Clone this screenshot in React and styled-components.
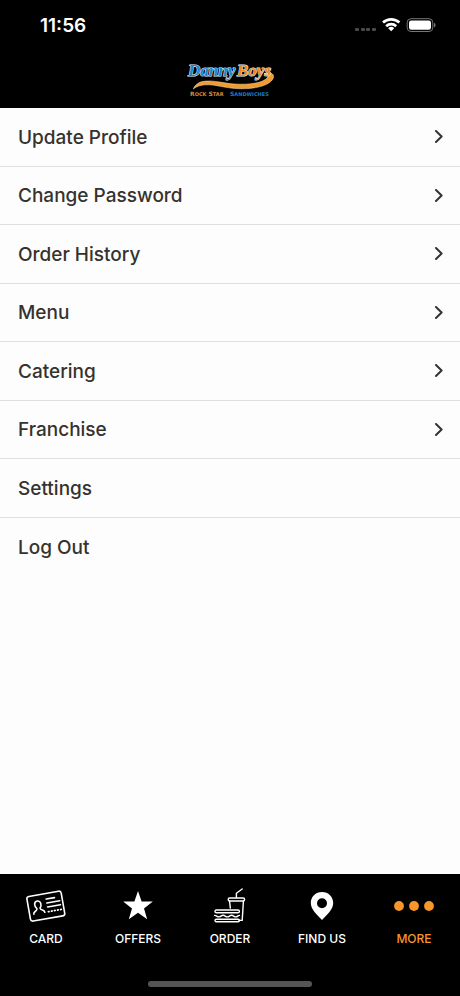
import React from "react";
import styled, { createGlobalStyle } from "styled-components";

const menuItems = [
  { label: "Update Profile", href: "#" },
  { label: "Change Password", href: "#" },
  { label: "Order History", href: "#" },
  { label: "Menu", href: "#" },
  { label: "Catering", href: "#" },
  { label: "Franchise", href: "#" },
  { label: "Settings" },
  { label: "Log Out" },
];

const tabs = [
  { label: "CARD", icon: <CardIcon /> },
  { label: "OFFERS", icon: <StarIcon /> },
  { label: "ORDER", icon: <OrderIcon /> },
  { label: "FIND US", icon: <PinIcon /> },
  { label: "MORE", icon: <MoreIcon />, active: true },
];

const App = () => {
  return (
    <>
      <GlobalStyle />
      <StScreen>
        {/* -------------- Header -------------- */}
        <StHeader>
          <StStatusBar>
            <StTime>11:56</StTime>
            <StatusIcons />
          </StStatusBar>
          <StBrand>
            <Logo />
          </StBrand>
        </StHeader>

        {/* -------------- Menu -------------- */}
        <StMain>
          <StList>
            {menuItems.map(({ label, href }) => (
              <StItem key={label}>
                {href ? (
                  <StRowLink href={href}>
                    {label}
                    <Chevron />
                  </StRowLink>
                ) : (
                  <StRowButton type="button">{label}</StRowButton>
                )}
              </StItem>
            ))}
          </StList>
        </StMain>

        {/* -------------- Tab Bar -------------- */}
        <StFooter>
          <StTabs>
            {tabs.map(({ label, icon, active }) => (
              <StTab
                key={label}
                href="#"
                $active={active}
                aria-current={active ? "page" : undefined}
              >
                {icon}
                {label}
              </StTab>
            ))}
          </StTabs>
          <StHomeIndicator />
        </StFooter>
      </StScreen>
    </>
  );
};

export default App;

function StatusIcons() {
  return (
    <svg width="82" height="16" viewBox="0 0 82 16" aria-hidden="true">
      <g fill="#4a4a4a">
        <rect x="1" y="11" width="4" height="3" rx="1" />
        <rect x="7" y="11" width="4" height="3" rx="1" />
        <rect x="12" y="11" width="4" height="3" rx="1" />
        <rect x="18" y="11" width="4" height="3" rx="1" />
      </g>
      <g fill="none" stroke="#fff" strokeWidth="2.7">
        <path d="M29 5.600a12 12 0 0 1 16.400 0" />
        <path d="M32.200 9.200a7.200 7.200 0 0 1 10 0" />
      </g>
      <path d="M34.200 11.200a4.400 4.400 0 0 1 6 0l-3 3.100z" fill="#fff" />
      <rect
        x="53.200"
        y="1.700"
        width="25.600"
        height="12.800"
        rx="3.800"
        fill="none"
        stroke="#777"
      />
      <rect x="55" y="3.500" width="22" height="9.200" rx="2.300" fill="#fff" />
      <path d="M80 5.800c2 .8 2 3.800 0 4.600z" fill="#777" />
    </svg>
  );
}

function Logo() {
  return (
    <svg
      width="92"
      height="40"
      viewBox="0 0 92 40"
      role="img"
      aria-label="DannyBoys Rock Star Sandwiches"
    >
      <path
        d="M9.300 29C11 24.500 15 22 20 21.300C30 20 40 23.400 50 24C66 25 79 23 83.500 17.500C85 15.600 83 14.400 80 13.600C86 11.800 90 13.500 89.500 17C88.500 22.500 80 27.500 63 28.600C46 29.500 36 25.500 26 24.800C18 24.400 13 26 9.300 29z"
        fill="#f39a2d"
        stroke="#ffe9c8"
        strokeWidth="0.5"
      />
      <g
        fontFamily='"Liberation Serif", serif'
        fontSize="17"
        fontWeight="700"
        fontStyle="italic"
        stroke="#e8f4ff"
        strokeWidth="1"
        paintOrder="stroke"
      >
        <text x="4" y="16" fill="#1c86cc">
          Danny
        </text>
        <text x="53" y="16" fill="#f08a1d">
          Boys
        </text>
      </g>
      <g
        fontFamily='"DejaVu Sans", sans-serif'
        fontWeight="700"
        fontSize="6"
      >
        <text x="6" y="36" fill="#d98a3c">
          R<tspan fontSize="5">OCK</tspan> S<tspan fontSize="5">TAR</tspan>
        </text>
        <text x="46" y="36" fill="#1f7bb8">
          S<tspan fontSize="5">ANDWICHES</tspan>
        </text>
      </g>
    </svg>
  );
}

function Chevron() {
  return (
    <svg width="10" height="14" viewBox="0 0 10 14" aria-hidden="true">
      <path
        d="M2 1L7.600 6.500L2 12"
        fill="none"
        stroke="#333"
        strokeWidth="2"
        strokeLinecap="round"
        strokeLinejoin="round"
      />
    </svg>
  );
}

function CardIcon() {
  return (
    <svg width="44" height="36" viewBox="0 0 44 36" aria-hidden="true">
      <g
        transform="rotate(-10 22 18)"
        fill="none"
        stroke="currentColor"
        strokeWidth="1.6"
        strokeLinecap="round"
      >
        <rect x="4.400" y="5.600" width="34.800" height="25" rx="2.400" />
        <path d="M8.600 24c0-3.400 4-2 4-5-2.500-2.600-2-7.400 1.600-7.400s4.100 4.800 1.600 7.400c0 3 4 1.600 4 5" />
        <path d="M23.400 11.200h8.400M23.400 15.200h13M23.400 19.200h13" />
        <path d="M23.400 24h13" strokeDasharray="0.600 2.500" strokeWidth="1.800" />
      </g>
    </svg>
  );
}

function StarIcon() {
  return (
    <svg width="44" height="36" viewBox="0 0 44 36" aria-hidden="true">
      <path
        d="M22 3l3.600 10.400 11.200.2-8.800 6.800 3.200 10.800L22 24.800l-9.200 6.400L16 20.400l-8.800-6.800 11.200-.2z"
        fill="currentColor"
      />
    </svg>
  );
}

function OrderIcon() {
  return (
    <svg width="44" height="36" viewBox="0 0 44 36" aria-hidden="true">
      <g
        fill="none"
        stroke="currentColor"
        strokeWidth="1.400"
        strokeLinecap="round"
        strokeLinejoin="round"
      >
        <path d="M28.400 9.800V5.200L34.200 1" />
        <rect x="20.200" y="10" width="16.400" height="3" rx="1.500" />
        <path d="M21.600 13.200l.7 6.800M35.400 13.200l-1.200 19.200H31" />
        <rect x="7" y="22" width="24.400" height="2.800" rx="1.400" />
        <path d="M6.600 27.400c2 0 2.200 1.500 4.200 1.500s2.300-1.600 4.300-1.600 2.200 1.600 4.200 1.600 2.300-1.600 4.300-1.600 2.200 1.600 4.200 1.600 1.800-1.500 3.600-1.500" />
        <rect x="7" y="31.200" width="24.400" height="2.600" rx="1.300" />
      </g>
    </svg>
  );
}

function PinIcon() {
  return (
    <svg width="44" height="36" viewBox="0 0 44 36" aria-hidden="true">
      <path
        d="M22 4c-6.400 0-11.200 4.900-11.200 11C10.800 21.500 17 26.500 22 32c5-5.500 11.200-10.500 11.200-17C33.200 8.900 28.400 4 22 4zm0 6.200a5 5 0 1 1 0 10 5 5 0 0 1 0-10z"
        fill="currentColor"
        fillRule="evenodd"
      />
    </svg>
  );
}

function MoreIcon() {
  return (
    <svg width="44" height="36" viewBox="0 0 44 36" aria-hidden="true">
      <g fill="currentColor">
        <circle cx="7" cy="18" r="4.900" />
        <circle cx="22" cy="18" r="4.900" />
        <circle cx="37" cy="18" r="4.900" />
      </g>
    </svg>
  );
}

const GlobalStyle = createGlobalStyle`
  * {
    box-sizing: border-box;
  }

  body {
    margin: 0;
    background-color: #fdfdfd;
    font-family: Inter, Roboto, sans-serif;
  }
`;

const StScreen = styled.div`
  display: flex;
  flex-direction: column;
  min-height: 100vh;
`;

const StHeader = styled.header`
  background-color: #000;
  color: #fff;
`;

const StStatusBar = styled.div`
  display: flex;
  align-items: center;
  justify-content: space-between;
  height: 50px;
  padding: 0 24px 0 40px;
`;

const StTime = styled.time`
  font-size: 19px;
  font-weight: 600;
`;

const StBrand = styled.div`
  display: flex;
  justify-content: center;
  padding: 10px 0 8px;
`;

const StMain = styled.main`
  flex: 1;
`;

const StList = styled.ul`
  margin: 0;
  padding: 0;
  list-style: none;
`;

const StItem = styled.li`
  display: flex;
  height: 59px;
  border-bottom: 1px solid #e0e0e2;

  &:nth-child(even) {
    height: 58px;
  }

  &:last-child {
    border-bottom: 0;
  }
`;

const StRowLink = styled.a`
  display: flex;
  flex: 1;
  align-items: center;
  justify-content: space-between;
  padding: 0 16px 0 18px;
  border: 0;
  background-color: transparent;
  color: #36322d;
  font-family: inherit;
  font-size: 19px;
  font-weight: 500;
  text-decoration: none;
  cursor: pointer;
`;

const StRowButton = styled(StRowLink).attrs({ as: "button" })``;

const StFooter = styled.footer`
  display: flex;
  flex-direction: column;
  align-items: center;
  gap: 33px;
  padding: 14px 0 9px;
  background-color: #000;
`;

const StTabs = styled.nav`
  display: grid;
  grid-template-columns: repeat(5, 1fr);
  width: 100%;
`;

const StTab = styled.a`
  display: flex;
  flex-direction: column;
  align-items: center;
  gap: 6px;
  color: ${({ $active }) => ($active ? "#f7962a" : "#fff")};
  font-size: 12px;
  font-weight: 500;
  line-height: 18px;
  text-decoration: none;
`;

const StHomeIndicator = styled.div`
  width: 164px;
  height: 6px;
  border-radius: 3px;
  background-color: #555;
`;
